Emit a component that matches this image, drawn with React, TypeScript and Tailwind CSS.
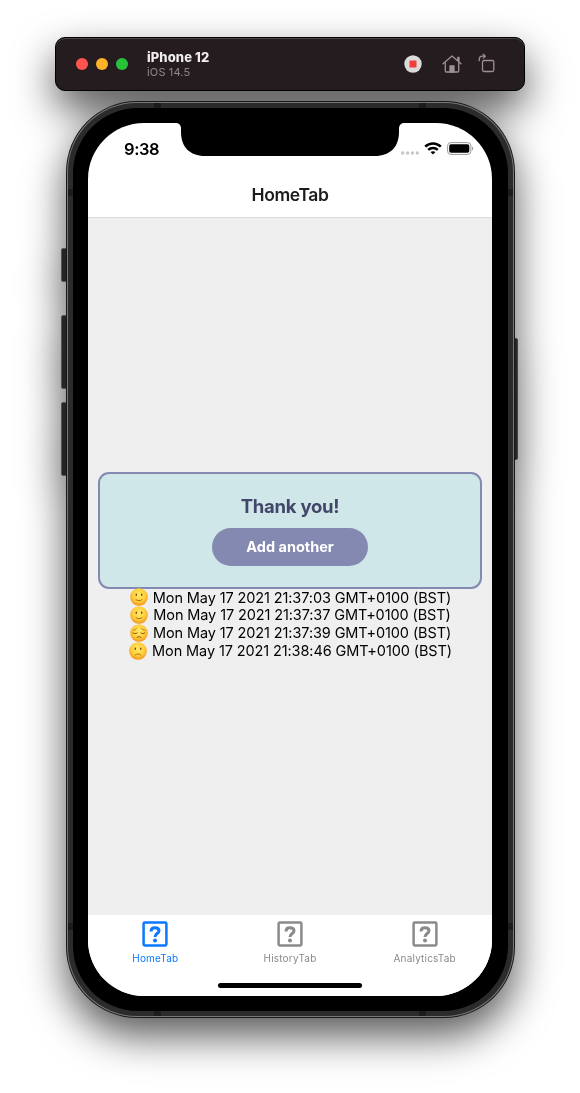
import type { ReactNode } from "react";

type Mood = "smile" | "pensive" | "frown";

const entries: { mood: Mood; text: string }[] = [
  { mood: "smile", text: "Mon May 17 2021 21:37:03 GMT+0100 (BST)" },
  { mood: "smile", text: "Mon May 17 2021 21:37:37 GMT+0100 (BST)" },
  { mood: "pensive", text: "Mon May 17 2021 21:37:39 GMT+0100 (BST)" },
  { mood: "frown", text: "Mon May 17 2021 21:38:46 GMT+0100 (BST)" },
];

function Face({ mood }: { mood: Mood }) {
  return (
    <svg viewBox="0 0 18 18" className="size-[18px] shrink-0">
      <defs>
        <radialGradient id={`face-${mood}`} cx="50%" cy="40%" r="60%">
          <stop offset="0%" stopColor="#ffe968" />
          <stop offset="60%" stopColor="#fed03c" />
          <stop offset="100%" stopColor="#f5921c" />
        </radialGradient>
      </defs>
      <circle cx="9" cy="9" r="8.8" fill={`url(#face-${mood})`} />
      {mood === "pensive" ? (
        <g fill="none" stroke="#7a4a10" strokeWidth="0.9" strokeLinecap="round">
          <path d="M2.8 8.6C3.8 9.9 6 10 7.2 8.9M15.2 8.6C14.2 9.9 12 10 10.8 8.9" />
          <path d="M3.2 6.2C4.6 6.1 5.8 5.5 6.4 4.6M14.8 6.2C13.4 6.1 12.2 5.5 11.6 4.6" strokeWidth="0.6" />
          <path d="M7 13.3C8.2 12.6 9.8 12.6 11 13.3" />
        </g>
      ) : (
        <g>
          <ellipse cx="6.3" cy="6.8" rx="0.75" ry="1.2" fill="#7a4a10" />
          <ellipse cx="11.7" cy="6.8" rx="0.75" ry="1.2" fill="#7a4a10" />
          <path
            d={mood === "smile" ? "M6 11.7C7.6 13 10.4 13 12 11.7" : "M6.1 13C7.5 11.6 10.5 11.6 11.9 13"}
            fill="none"
            stroke="#a8640f"
            strokeWidth="0.9"
            strokeLinecap="round"
          />
        </g>
      )}
    </svg>
  );
}

function SimulatorBar() {
  return (
    <div className="ml-[55px] flex h-[54px] w-[470px] items-center rounded-[10px] border border-black bg-[#251c1f] pl-5 pr-[28px] shadow-[inset_0_1px_0_#4b4446]">
      <div className="flex gap-2">
        <span className="size-3 rounded-full bg-[#ff534d]" />
        <span className="size-3 rounded-full bg-[#ffb32b]" />
        <span className="size-3 rounded-full bg-[#27c33a]" />
      </div>
      <div className="ml-[19px] flex flex-col pt-px">
        <span className="text-[13px] font-extrabold leading-[15px] tracking-[0.1px] text-[#efedee]">iPhone 12</span>
        <span className="text-[11px] leading-[14px] tracking-[0.15px] text-[#93898c]">iOS 14.5</span>
      </div>
      <svg viewBox="0 0 18 18" className="ml-auto size-[18px]">
        <circle cx="9" cy="9" r="8.7" fill="#dcdadb" />
        <rect x="5.5" y="5.5" width="7" height="7" rx="0.5" fill="#ee3f38" />
      </svg>
      <svg viewBox="0 0 20 18" className="ml-5 h-[18px] w-5" fill="none" stroke="#9c9093" strokeWidth="1.3" strokeLinecap="round" strokeLinejoin="round">
        <path d="M1 8.8L10 1L19 8.8M15.8 5.6V2.3H17V6.8M3.3 8V16C3.3 16.7 3.7 17 4.3 17H15.7C16.3 17 16.7 16.7 16.7 16V8" />
        <path d="M8 17V10.8H12V17Z" fill="#9c9093" />
      </svg>
      <svg viewBox="0 0 18 20" className="ml-4 mt-[-2px] h-5 w-[18px]" fill="none" stroke="#9c9093" strokeWidth="1.3" strokeLinecap="round" strokeLinejoin="round">
        <rect x="4.5" y="7.5" width="11.3" height="11" rx="1.5" />
        <path d="M1.3 7.7V6.2C1.3 4.3 2.5 3.2 4.3 3.2H7M5.3 1.3L7.3 3.2L5.3 5.1" />
      </svg>
    </div>
  );
}

function StatusBar() {
  return (
    <div className="flex h-[51px] shrink-0 items-center justify-between pl-9 pr-[18px]">
      <span className="pt-px text-[16.5px] font-semibold tracking-[-0.4px] text-black">9:38</span>
      <div className="flex items-center">
        <svg viewBox="0 0 18 4" className="mr-[5px] mt-[9px] h-1 w-[18px]" fill="#c7c7c7">
          <circle cx="1.7" cy="2" r="1.7" />
          <circle cx="6.6" cy="2" r="1.7" />
          <circle cx="11.4" cy="2" r="1.7" />
          <circle cx="16.3" cy="2" r="1.7" />
        </svg>
        <svg viewBox="0 0 18 13" className="mr-[5px] h-[13px] w-[18px]" fill="none" stroke="#000" strokeWidth="2.4">
          <path d="M1.2 4.7C5.5 0.4 12.5 0.4 16.8 4.7" />
          <path d="M4.2 7.9C6.9 5.3 11.1 5.3 13.8 7.9" />
          <path d="M9 12.6L6.5 10.1C7.9 8.8 10.1 8.8 11.5 10.1Z" fill="#000" stroke="none" />
        </svg>
        <svg viewBox="0 0 27 13" className="h-[13px] w-[27px]">
          <rect x="0.6" y="0.6" width="23.3" height="11.8" rx="3.2" fill="none" stroke="#999" strokeWidth="1" />
          <rect x="2.2" y="2.2" width="20.1" height="8.6" rx="1.8" fill="#000" />
          <path d="M25 4.5C26.6 5.1 26.6 7.9 25 8.5Z" fill="#999" />
        </svg>
      </div>
    </div>
  );
}

function Tab({ children, active }: { children: ReactNode; active?: boolean }) {
  return (
    <div className={`flex flex-1 flex-col items-center pt-[6px] ${active ? "text-[#0a78ff]" : "text-[#8a8a8a]"}`}>
      <svg viewBox="0 0 26 26" className="size-[26px]" fill="none" stroke="currentColor">
        <rect x="1.6" y="1.6" width="22.8" height="22.8" rx="1.2" strokeWidth="2.5" />
        <path d="M9 10.4C9 7.7 10.6 6.7 12.9 6.7C15.4 6.7 17 7.8 17 9.8C17 12.6 13 12.5 13 16" strokeWidth="3" />
        <circle cx="13" cy="19.4" r="2" fill="currentColor" stroke="none" />
      </svg>
      <span className="mt-[5px] text-[10px] leading-3 tracking-[0.2px]">{children}</span>
    </div>
  );
}

function AntennaBands() {
  return (
    <>
      <div className="absolute left-[88px] top-[2px] h-[5px] w-[7px] bg-[#1c1c1c]" />
      <div className="absolute right-[89px] top-[2px] h-[5px] w-[7px] bg-[#1c1c1c]" />
      <div className="absolute bottom-[2px] left-[88px] h-[5px] w-[7px] bg-[#1c1c1c]" />
      <div className="absolute bottom-[2px] right-[89px] h-[5px] w-[7px] bg-[#1c1c1c]" />
      <div className="absolute left-[2px] top-[88px] h-[7px] w-[5px] bg-[#1c1c1c]" />
      <div className="absolute right-[2px] top-[88px] h-[7px] w-[5px] bg-[#1c1c1c]" />
      <div className="absolute bottom-[88px] left-[2px] h-[7px] w-[5px] bg-[#1c1c1c]" />
      <div className="absolute bottom-[88px] right-[2px] h-[7px] w-[5px] bg-[#1c1c1c]" />
    </>
  );
}

function Phone() {
  return (
    <div className="relative ml-[66px] mt-[10px] h-[917px] w-[449px]">
      <div className="absolute left-[-5px] top-[147px] h-[34px] w-[8px] rounded-[2px] border border-[#555] bg-[#252525]" />
      <div className="absolute left-[-5px] top-[214px] h-[74px] w-[8px] rounded-[2px] border border-[#555] bg-[#252525]" />
      <div className="absolute left-[-5px] top-[301px] h-[74px] w-[8px] rounded-[2px] border border-[#555] bg-[#252525]" />
      <div className="absolute right-[-3px] top-[237px] h-[122px] w-[8px] rounded-[2px] border border-[#444] bg-[#252525]" />
      <div className="relative size-full rounded-[71px] bg-[#181818] p-px">
        <div className="size-full rounded-[70px] bg-[#777] p-px">
          <div className="size-full rounded-[69px] bg-[#2b2b2b] p-[5px]">
            <div className="size-full rounded-[65px] bg-black py-[15px] pl-[15px] pr-4">
              <div className="relative flex size-full flex-col overflow-hidden rounded-[56px] bg-white">
                <svg viewBox="0 0 230 34" className="absolute left-[87px] top-[-1px] h-[34px] w-[230px]">
                  <path d="M0 0V1C4 1 6 2.8 6 7V10C6 25 15 34 30 34H200C215 34 224 25 224 10V7C224 2.8 226 1 230 1V0Z" fill="#000" />
                </svg>
                <StatusBar />
                <div className="flex h-[44px] shrink-0 items-center justify-center border-b border-[#dcdcdc] text-[17.5px] font-semibold tracking-[-0.4px] text-[#1c1c1e]">
                  HomeTab
                </div>
                <div className="flex flex-1 flex-col justify-center bg-[#efefef] pb-[2px]">
                  <div className="mx-[10px] flex h-[117px] flex-col items-center rounded-[11px] border-2 border-[#8489b1] bg-[#d0e7e9] pt-[20px]">
                    <span className="text-[18.5px] font-bold leading-6 tracking-[-0.25px] text-[#424769]">Thank you!</span>
                    <button className="mt-[10px] h-[38px] w-[156px] rounded-full bg-[#8389b1] text-[14.5px] font-bold text-white">
                      Add another
                    </button>
                  </div>
                  {entries.map((e) => (
                    <div key={e.text} className="flex h-[17.7px] items-center justify-center gap-[5px] pl-px">
                      <Face mood={e.mood} />
                      <span className="whitespace-nowrap text-[14.5px] leading-[17.7px] tracking-[-0.11px] text-black">{e.text}</span>
                    </div>
                  ))}
                </div>
                <div className="flex h-[81px] shrink-0 bg-white">
                  <Tab active>HomeTab</Tab>
                  <Tab>HistoryTab</Tab>
                  <Tab>AnalyticsTab</Tab>
                </div>
                <div className="absolute bottom-[8px] left-[130px] h-[5px] w-[144px] rounded-full bg-black" />
              </div>
            </div>
          </div>
        </div>
        <AntennaBands />
      </div>
    </div>
  );
}

export default function App() {
  return (
    <div className="h-[1093px] w-[580px] overflow-hidden bg-white font-['Inter',sans-serif]">
      <div className="h-full w-full pt-[37px] [filter:drop-shadow(0_18px_20px_rgba(0,0,0,0.66))]">
        <SimulatorBar />
        <Phone />
      </div>
    </div>
  );
}
